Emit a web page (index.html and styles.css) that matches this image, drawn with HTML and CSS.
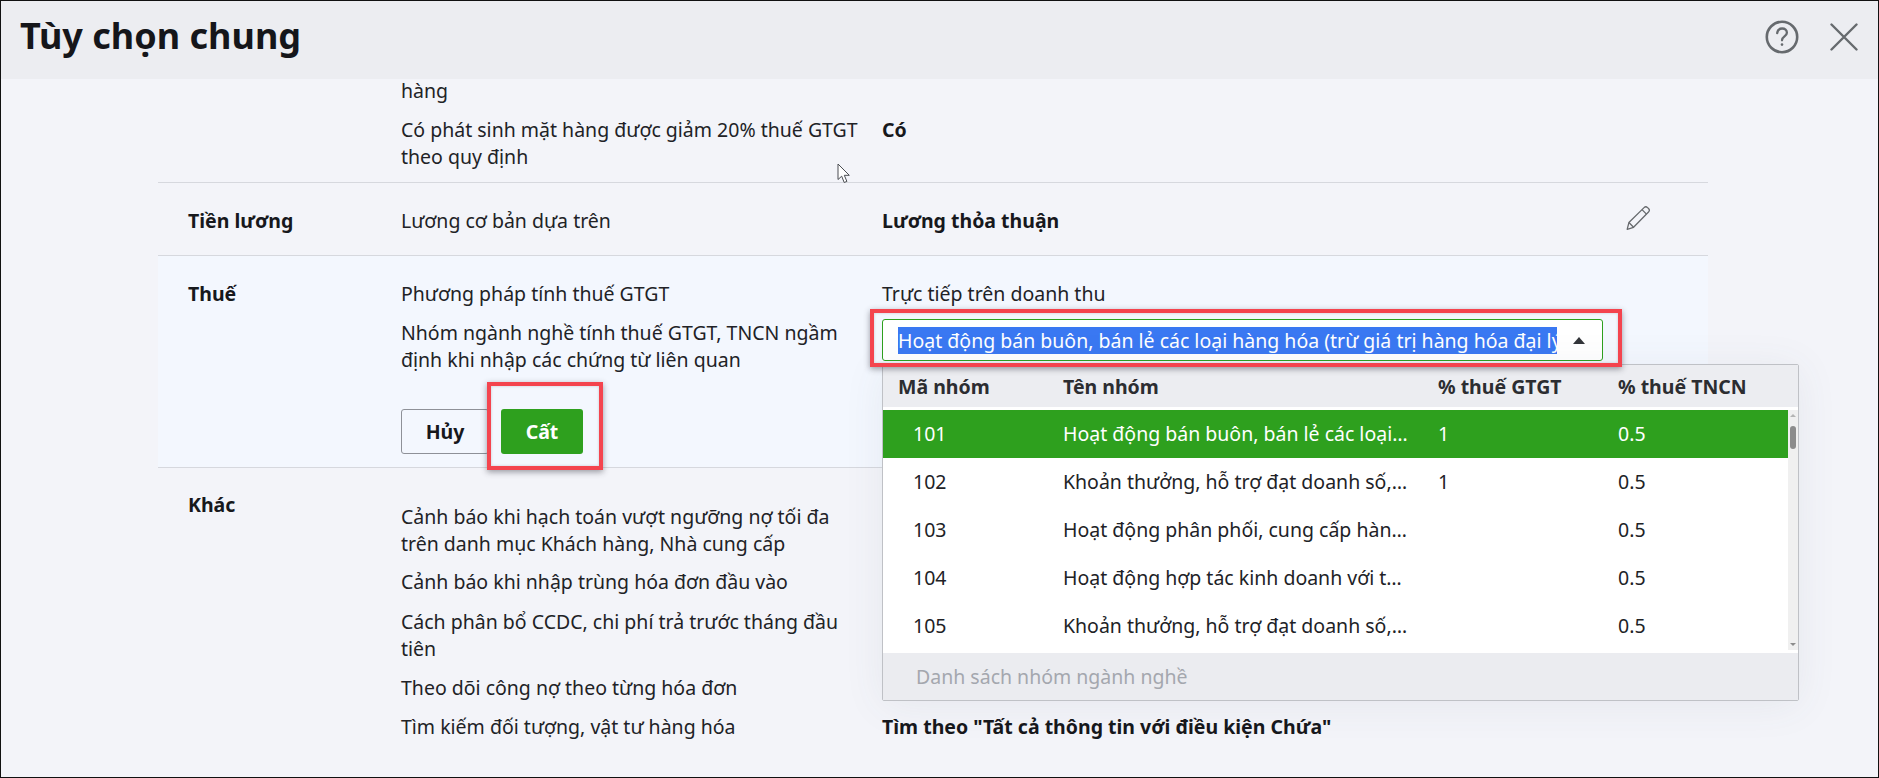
FILE: index.html
```html
<!DOCTYPE html>
<html lang="vi">
<head>
<meta charset="utf-8">
<title>Tùy chọn chung</title>
<link rel="stylesheet" href="styles.css">
</head>
<body>
<div class="dialog">
  <header class="head">
    <h1 class="title">Tùy chọn chung</h1>
    <div class="head-icons">
      <svg class="icon-help" width="36" height="36" viewBox="0 0 36 36" fill="none" stroke="#666a6e" stroke-width="2.6" stroke-linecap="round">
        <circle cx="18" cy="18" r="15.2"/>
        <path d="M13.2 14.2c.3-3 2.400-4.700 5-4.700 2.700 0 4.700 1.700 4.700 4.200 0 3.800-4.900 3.700-4.900 7.600" stroke-width="2.300"/>
        <circle cx="18" cy="25.600" r="1.300" fill="#666a6e" stroke="none"/>
      </svg>
      <svg class="icon-close" width="28" height="28" viewBox="0 0 28 28" fill="none" stroke="#666a6e" stroke-width="2.400" stroke-linecap="round">
        <path d="M1.500 1.500l25 25M26.500 1.500l-25 25"/>
      </svg>
    </div>
  </header>

  <main class="body">
    <section class="group group-a">
      <div class="label"></div>
      <div class="items">
        <div class="item"><div class="key">hàng</div><div class="val"></div></div>
        <div class="item"><div class="key">Có phát sinh mặt hàng được giảm 20% thuế GTGT theo quy định</div><div class="val strong">Có</div></div>
      </div>
    </section>

    <section class="group group-b">
      <div class="label">Tiền lương</div>
      <div class="items">
        <div class="item">
          <div class="key">Lương cơ bản dựa trên</div>
          <div class="val strong">Lương thỏa thuận</div>
          <svg class="icon-edit" width="26" height="26" viewBox="0 0 24 24" fill="none" stroke="#66696d" stroke-width="1.200" stroke-linejoin="round">
            <path d="M2 22.500l1.600-6.300L17.600 2.400c.9-.9 2.300-.9 3.200 0l.9.9c.9.900.9 2.300 0 3.200L7.900 20.600z"/>
            <path d="M15.700 4.300l4.100 4.100M3.600 16.200l4.300 4.400"/>
          </svg>
        </div>
      </div>
    </section>

    <section class="group group-c">
      <div class="label">Thuế</div>
      <div class="items">
        <div class="item"><div class="key">Phương pháp tính thuế GTGT</div><div class="val">Trực tiếp trên doanh thu</div></div>
        <div class="item">
          <div class="key">Nhóm ngành nghề tính thuế GTGT, TNCN ngầm định khi nhập các chứng từ liên quan</div>
          <div class="val">
            <div class="combo">
              <span class="combo-text">Hoạt động bán buôn, bán lẻ các loại hàng hóa (trừ giá trị hàng hóa đại lý hoa hồng)</span>
              <span class="combo-arrow"></span>
              <span class="callout callout-combo"></span>
              <div class="drop">
                <div class="drop-head">
                  <div class="cell first">Mã nhóm</div>
                  <div class="cell">Tên nhóm</div>
                  <div class="cell">% thuế GTGT</div>
                  <div class="cell">% thuế TNCN</div>
                </div>
                <div class="drop-list">
                  <div class="rows">
                    <div class="row selected"><div class="cell code">101</div><div class="cell name">Hoạt động bán buôn, bán lẻ các loại hàng hóa</div><div class="cell">1</div><div class="cell">0.5</div></div>
                    <div class="row"><div class="cell code">102</div><div class="cell name">Khoản thưởng, hỗ trợ đạt doanh số, khuyến mại</div><div class="cell">1</div><div class="cell">0.5</div></div>
                    <div class="row"><div class="cell code">103</div><div class="cell name">Hoạt động phân phối, cung cấp hàng hóa dịch vụ</div><div class="cell"></div><div class="cell">0.5</div></div>
                    <div class="row"><div class="cell code">104</div><div class="cell name">Hoạt động hợp tác kinh doanh với tổ chức</div><div class="cell"></div><div class="cell">0.5</div></div>
                    <div class="row"><div class="cell code">105</div><div class="cell name">Khoản thưởng, hỗ trợ đạt doanh số, khuyến mại</div><div class="cell"></div><div class="cell">0.5</div></div>
                  </div>
                  <div class="scroll">
                    <span class="scroll-up"></span>
                    <span class="scroll-thumb"></span>
                    <span class="scroll-down"></span>
                  </div>
                </div>
                <div class="drop-foot">Danh sách nhóm ngành nghề</div>
              </div>
            </div>
          </div>
        </div>
        <div class="actions">
          <button class="btn btn-cancel" type="button">Hủy</button>
          <div class="save-wrap">
            <button class="btn btn-save" type="button">Cất</button>
            <span class="callout callout-save"></span>
          </div>
        </div>
      </div>
    </section>

    <section class="group group-d">
      <div class="label">Khác</div>
      <div class="items items-d">
        <div class="item"><div class="key">Cảnh báo khi hạch toán vượt ngưỡng nợ tối đa trên danh mục Khách hàng, Nhà cung cấp</div><div class="val"></div></div>
        <div class="item tight"><div class="key">Cảnh báo khi nhập trùng hóa đơn đầu vào</div><div class="val"></div></div>
        <div class="item loose"><div class="key">Cách phân bổ CCDC, chi phí trả trước tháng đầu tiên</div><div class="val"></div></div>
        <div class="item"><div class="key">Theo dõi công nợ theo từng hóa đơn</div><div class="val"></div></div>
        <div class="item"><div class="key">Tìm kiếm đối tượng, vật tư hàng hóa</div><div class="val strong">Tìm theo "Tất cả thông tin với điều kiện Chứa"</div></div>
      </div>
    </section>
  </main>

  <svg class="cursor" width="14" height="21" viewBox="0 0 14 21">
    <path d="M1 1v15.500l3.700-3.300 2.500 6.300 2.700-1.100-2.600-6.100h5z" fill="#fff" stroke="#4a4d52" stroke-width="1"/>
  </svg>
</div>
</body>
</html>
```
FILE: styles.css
```css
* { box-sizing: border-box; }
html, body { margin: 0; height: 100%; }
body {
  font-family: "Noto Sans", "Open Sans", sans-serif;
  font-size: 19.5px;
  line-height: 27px;
  color: #212226;
  background: #f3f4f9;
  overflow: hidden;
}
.dialog {
  position: relative;
  width: 1879px;
  height: 778px;
  border: 1px solid #111;
  background: #f3f4f9;
  overflow: hidden;
}
.head {
  height: 78px;
  background: #ecedf1;
  display: flex;
  align-items: center;
  justify-content: space-between;
  padding: 0 20px 6px 19px;
}
.title {
  margin: -2px 0 0;
  font-size: 36px;
  line-height: 44px;
  font-weight: 700;
  color: #15161a;
}
.head-icons { display: flex; align-items: center; gap: 30px; }
.icon-help, .icon-close { display: block; }

.body { padding: 0 170px 0 157px; }
.group {
  display: grid;
  grid-template-columns: 243px 1fr;
  border-bottom: 1px solid #d6d8de;
}
.group-a { height: 104px; }
.group-b { height: 73px; padding-top: 24px; }
.group-c { height: 212px; padding-top: 24px; background: #f3f7fe; }
.group-d { padding-top: 22px; border-bottom: 0; }
.label { padding-left: 30px; font-weight: 700; color: #17181c; }
.group-d .label { padding-top: 1px; }
.items { display: flex; flex-direction: column; gap: 12px; }
.group-a .items { margin-top: -2px; }
.items-d { padding-top: 13px; }
.item {
  display: grid;
  grid-template-columns: 481px 1fr 83px;
  align-items: start;
}
.item.tight { margin-top: -1px; }
.item.loose { margin-top: 1px; }
.key { width: 466px; }
.strong { font-weight: 700; color: #17181c; }
.icon-edit { display: block; margin-top: -2px; }

.combo {
  position: relative;
  width: 721px;
  height: 42px;
  background: #fff;
  border: 1px solid #2ea01e;
  border-radius: 3px;
  display: flex;
  align-items: center;
  padding-left: 15px;
}
.combo-text {
  display: block;
  width: 659px;
  height: 27px;
  background: #3a78f2;
  color: #fff;
  white-space: nowrap;
  overflow: hidden;
}
.combo-arrow {
  margin-left: 16px;
  width: 0;
  height: 0;
  border-left: 6px solid transparent;
  border-right: 6px solid transparent;
  border-bottom: 7px solid #33353a;
}
.callout {
  position: absolute;
  border: 4px solid #f4444e;
  box-shadow: 0 2px 6px rgba(40, 40, 50, .45), inset 0 0 3px rgba(40, 40, 50, .2);
  pointer-events: none;
}
.callout-combo { left: -13px; top: -11px; width: 752px; height: 58px; z-index: 3; }
.callout-save { left: -14px; top: -27px; width: 116px; height: 88px; }

.drop {
  position: absolute;
  left: -1px;
  top: 44px;
  width: 917px;
  height: 337px;
  border: 1px solid #bfc1c6;
  border-radius: 2px;
  background: #fff;
  box-shadow: 0 4px 40px rgba(80, 85, 100, .08);
  z-index: 2;
  display: flex;
  flex-direction: column;
}
.drop-head, .row {
  display: grid;
  grid-template-columns: 180px 375px 180px 1fr;
  align-items: center;
}
.drop-head {
  height: 42px;
  flex: none;
  background: #ecedf1;
  font-weight: 700;
  color: #2c2d31;
}
.drop-head .first { padding-left: 15px; }
.drop-list { display: flex; height: 240px; margin-top: 3px; flex: none; }
.rows { flex: 1; min-width: 0; }
.row { height: 48px; padding-bottom: 2px; }
.row.selected { background: #2ea01e; color: #fff; }
.code { padding-left: 30px; }
.name {
  padding-right: 30px;
  white-space: nowrap;
  overflow: hidden;
  text-overflow: ellipsis;
}
.scroll {
  width: 10px;
  background: #f0f0f0;
  position: relative;
  flex: none;
}
.scroll-thumb {
  position: absolute;
  left: 2px;
  top: 16px;
  width: 6px;
  height: 23px;
  border-radius: 3px;
  background: #8c8c8c;
}
.scroll-up, .scroll-down {
  position: absolute;
  left: 2px;
  width: 0;
  height: 0;
  border-left: 3px solid transparent;
  border-right: 3px solid transparent;
}
.scroll-up { top: 4px; border-bottom: 3px solid #b4b4b4; }
.scroll-down { bottom: 4px; border-top: 3px solid #8c8c8c; }
.drop-foot {
  flex: 1;
  margin-top: 3px;
  background: #ebecf0;
  color: #a4a7ae;
  padding-left: 33px;
  display: flex;
  align-items: center;
}

.actions { display: flex; gap: 12px; margin-top: 24px; }
.save-wrap { position: relative; }
.btn {
  display: block;
  height: 45px;
  font: 700 19.5px/1 "Noto Sans", "Open Sans", sans-serif;
  border-radius: 3px;
  cursor: pointer;
}
.btn-cancel { width: 88px; background: transparent; border: 1px solid #8e9198; color: #17181c; }
.btn-save { width: 82px; background: #2ea01e; border: 0; color: #fff; }
.cursor { position: absolute; left: 836px; top: 162px; }
```
